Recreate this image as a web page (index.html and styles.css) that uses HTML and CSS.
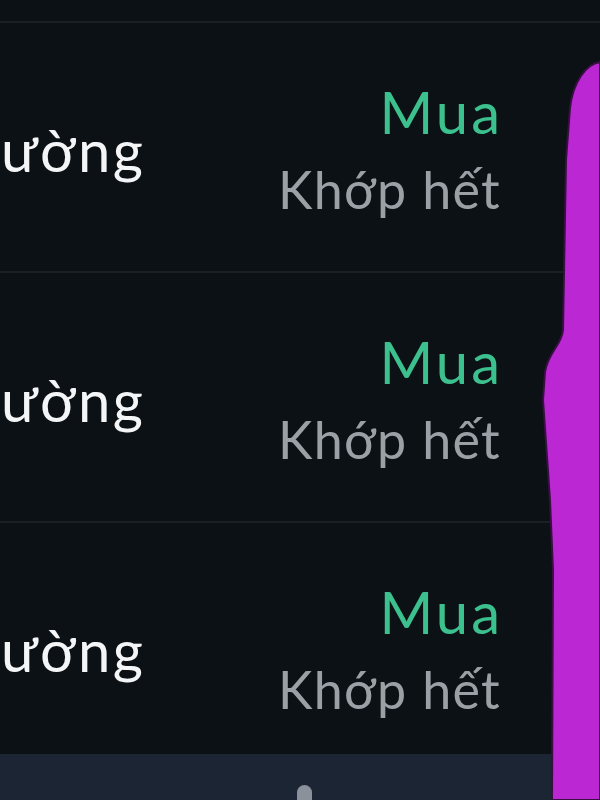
FILE: index.html
```html
<!DOCTYPE html>
<html lang="vi">
<head>
<meta charset="utf-8">
<link rel="stylesheet" href="styles.css">
</head>
<body>
<div class="list">
  <div class="row-top"></div>
  <div class="row">
    <div class="name">ường</div>
    <div class="status">
      <div class="side">Mua</div>
      <div class="state">Khớp hết</div>
    </div>
  </div>
  <div class="row">
    <div class="name">ường</div>
    <div class="status">
      <div class="side">Mua</div>
      <div class="state">Khớp hết</div>
    </div>
  </div>
  <div class="row">
    <div class="name">ường</div>
    <div class="status">
      <div class="side">Mua</div>
      <div class="state">Khớp hết</div>
    </div>
  </div>
</div>
<div class="bottom-bar"><span class="bar-icon"></span></div>
<svg class="marker" viewBox="0 0 600 800" width="600" height="800">
  <path d="M600,62 C586,64 573,82 570,108 L566,160 L563,330 C562,345 548,352 545,372 L543,400 L550,500 L553,570 L552,800 L600,800 Z" fill="#bb28d3" stroke="#3a0f44" stroke-width="2"/>
</svg>
</body>
</html>
```
FILE: styles.css
```css
html, body {
  margin: 0;
  padding: 0;
  background: #0c1115;
  overflow: hidden;
  height: 800px;
}
body {
  font-family: Lato, "Open Sans", sans-serif;
  position: relative;
}
.list {
  display: flex;
  flex-direction: column;
}
.row-top {
  height: 21px;
  border-bottom: 2px solid #1b2026;
}
.row {
  height: 248px;
  border-bottom: 2px solid #1b2026;
  display: flex;
  align-items: center;
  justify-content: space-between;
  padding-right: 100px;
}
.name {
  color: #f4f5f6;
  font-size: 58px;
  letter-spacing: 2.5px;
  margin-left: 1px;
  padding-top: 4px;
}
.status {
  display: flex;
  flex-direction: column;
  align-items: flex-end;
  padding-top: 6px;
}
.side {
  color: #3cc08e;
  font-size: 58px;
  line-height: 78px;
  letter-spacing: 3px;
  margin-right: -3px;
}
.state {
  color: #9ba0a7;
  font-size: 52px;
  line-height: 76px;
  letter-spacing: 1.3px;
  margin-right: -1px;
}
.bottom-bar {
  position: fixed;
  left: 0;
  right: 0;
  bottom: 0;
  height: 46px;
  background: #1b2533;
}
.bar-icon {
  position: absolute;
  left: 297px;
  top: 31px;
  width: 15px;
  height: 20px;
  border-radius: 8px 8px 0 0;
  background: #8b919a;
}
.marker {
  position: fixed;
  left: 0;
  top: 0;
  pointer-events: none;
}
```
